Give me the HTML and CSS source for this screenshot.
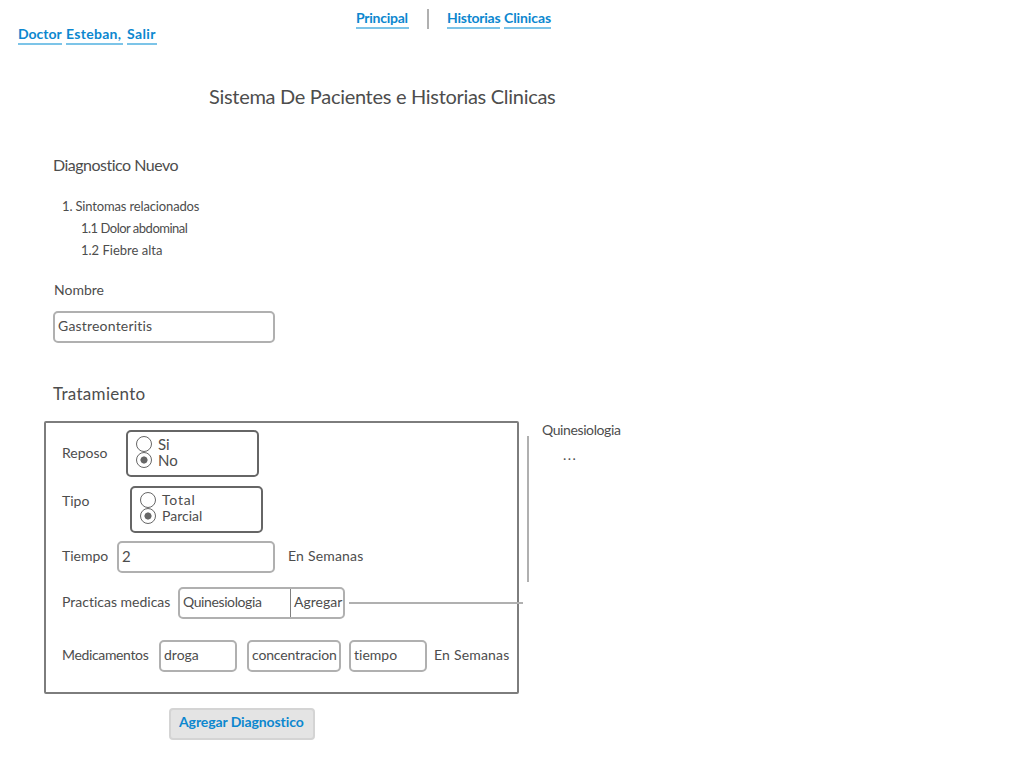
FILE: index.html
```html
<!DOCTYPE html>
<html lang="es">
<head>
<meta charset="utf-8">
<title>Sistema De Pacientes e Historias Clinicas</title>
<link rel="stylesheet" href="styles.css">
</head>
<body>
<header class="top">
  <div class="user"><a class="w-doctor">Doctor</a><a class="w-esteban">Esteban,</a><a class="w-salir">Salir</a></div>
  <nav class="nav"><a class="w-principal">Principal</a><span class="sep"></span><a class="w-historias">Historias</a><a class="w-clinicas">Clinicas</a></nav>
</header>
<h1 class="title">Sistema De Pacientes e Historias Clinicas</h1>
<main class="page">
  <h2 class="heading diagnosis">Diagnostico Nuevo</h2>
  <div class="symptoms">
    <div class="s-main">1. Sintomas relacionados</div>
    <div class="sub s-one">1.1 Dolor abdominal</div>
    <div class="sub s-two">1.2 Fiebre alta</div>
  </div>
  <div class="name-label">Nombre</div>
  <div class="field name-field">Gastreonteritis</div>
  <h2 class="heading treatment-title">Tratamiento</h2>
</main>
<div class="treatment">
  <section class="panel">
    <div class="row row-rest">
      <span class="label l-rest">Reposo</span>
      <div class="options"><div class="option o-si"><i class="radio"></i>Si</div><div class="option o-no"><i class="radio on"></i>No</div></div>
    </div>
    <div class="row row-type">
      <span class="label l-type">Tipo</span>
      <div class="options"><div class="option o-total"><i class="radio"></i>Total</div><div class="option o-parcial"><i class="radio on"></i>Parcial</div></div>
    </div>
    <div class="row row-time">
      <span class="label l-time">Tiempo</span>
      <div class="field f-time">2</div>
      <span class="label weeks">En Semanas</span>
    </div>
    <div class="row row-practice">
      <span class="label l-practice">Practicas medicas</span>
      <div class="field f-practice"><span class="practice">Quinesiologia</span><span class="add">Agregar</span></div>
      <span class="connector"></span>
    </div>
    <div class="row row-drugs">
      <span class="label l-drugs">Medicamentos</span>
      <div class="field f-drug">droga</div>
      <div class="field f-conc">concentracion</div>
      <div class="field f-dur">tiempo</div>
      <span class="label weeks w-last">En Semanas</span>
    </div>
  </section>
  <aside class="chosen">
    <div class="bar"></div>
    <div class="items"><div class="practice">Quinesiologia</div><div class="more">...</div></div>
  </aside>
</div>
<button class="submit">Agregar Diagnostico</button>
</body>
</html>
```
FILE: styles.css
```css
* { box-sizing: border-box; }
body { margin: 0; width: 1024px; height: 768px; overflow: hidden; background: #fff; color: #4d4d4d; font: 14px/20px Lato, sans-serif; font-variant-ligatures: none; white-space: nowrap; }
.top { display: flex; height: 86px; padding: 8px 0 0 18px; }
.user { display: flex; width: 338px; gap: 4px; padding-top: 16px; }
.nav { display: flex; }
.top a { height: 21px; color: #0c87cf; font-weight: bold; border-bottom: 2px solid #7cc4e8; }
.w-doctor { width: 44px; }
.w-esteban { width: 57px; letter-spacing: .3px; }
.w-salir { width: 30px; letter-spacing: .4px; }
.w-principal { width: 53px; letter-spacing: -.25px; }
.w-historias { width: 53px; letter-spacing: -.25px; margin-right: 4px; }
.w-clinicas { width: 47px; letter-spacing: -.1px; }
.sep { width: 2px; height: 20px; margin: 1px 18px 0; background: #b0b0b0; }
.title { margin: -4px 0 0 209px; font-size: 20px; line-height: 28px; font-weight: normal; letter-spacing: -.3px; }
.page { padding: 45px 0 0 53px; }
.heading { margin: 0; font-size: 17px; line-height: 20px; font-weight: normal; }
.diagnosis { font-size: 16px; letter-spacing: -.5px; }
.symptoms { margin: 20px 0 0 9px; font-size: 13px; line-height: 22px; }
.s-main { letter-spacing: -.15px; }
.s-one { letter-spacing: -.5px; }
.sub { padding-left: 19px; }
.name-label { margin: 19px 0 0 1px; }
.field { display: flex; height: 32px; padding: 3px 3px 0; border: 2px solid #b0b0b0; border-radius: 5px; }
.name-field { width: 222px; margin-top: 11px; letter-spacing: .2px; }
.treatment-title { margin-top: 41px; letter-spacing: .3px; }
.treatment { display: flex; margin: 17px 0 0 44px; }
.panel { width: 475px; height: 273px; padding: 7px 0 0 16px; border: 2px solid #7d7d7d; border-radius: 2px; }
.row { display: flex; }
.label { flex: none; padding-top: 5px; }
.options { width: 133px; height: 47px; padding: 4px 8px; border: 2px solid #666; border-radius: 5px; }
.option { display: flex; height: 16px; line-height: 16px; gap: 6px; }
.o-si, .o-no { font-size: 15px; }
.o-total { letter-spacing: .8px; }
.radio { flex: none; width: 16px; height: 16px; border: 1px solid #666; border-radius: 50%; }
.radio.on { background: radial-gradient(circle, #666 3.2px, transparent 3.9px); }
.row-rest { height: 56px; }
.row-rest .label { width: 64px; padding-top: 13px; }
.row-type { height: 55px; }
.row-type .label { width: 68px; padding-top: 5px; }
.row-time { height: 46px; }
.l-time { width: 55px; }
.f-time { width: 158px; margin-right: 13px; font-size: 15px; }
.weeks { letter-spacing: .2px; }
.row-practice { height: 53px; }
.l-practice { width: 116px; }
.practice { letter-spacing: -.4px; }
.f-practice { width: 168px; padding-right: 0; }
.f-practice .practice { flex: none; width: 107px; }
.add { flex: none; width: 53px; height: 28px; margin-top: -3px; padding: 3px 0 0 3px; border-left: 1px solid #808080; }
.connector { flex: none; width: 174px; height: 2px; margin: 15px 0 0 4px; background: #b0b0b0; }
.l-drugs { width: 97px; letter-spacing: -.35px; }
.f-drug { width: 78px; margin-right: 10px; }
.f-conc { width: 94px; margin-right: 8px; letter-spacing: -.15px; }
.f-dur { width: 78px; margin-right: 7px; }
.chosen { display: flex; margin: -1px 0 0 8px; }
.bar { width: 2px; height: 146px; margin: 16px 13px 0 0; background: #b0b0b0; }
.more { padding: 5px 0 0 21px; letter-spacing: 1.5px; }
.submit { display: block; width: 146px; height: 32px; margin: 14px 0 0 169px; padding: 0 0 4px 8px; border: 2px solid #d4d4d4; border-radius: 4px; background: #e4e4e4; color: #0c87cf; font: bold 14px/20px Lato, sans-serif; text-align: left; letter-spacing: -.1px; }
```
